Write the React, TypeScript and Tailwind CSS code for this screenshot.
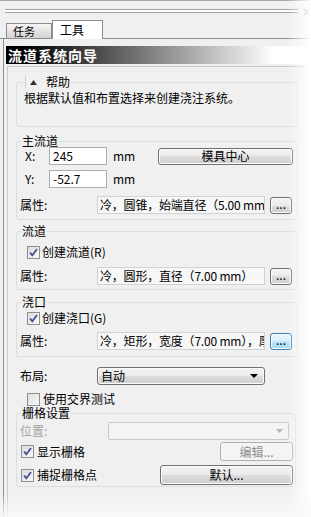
import React from "react";

function Check({ checked = false }: { checked?: boolean }) {
  return (
    <span className="w-[13px] h-[13px] shrink-0 border border-[#8e8f8f] bg-[linear-gradient(135deg,#dcdcdc,#fbfbfb)] flex items-center justify-center">
      {checked && (
        <svg width="11" height="11" viewBox="0 0 11 11">
          <path d="M2 5.5 L4.3 8.3 L9 2" fill="none" stroke="#3f4f8f" strokeWidth="1.8" />
        </svg>
      )}
    </span>
  );
}

function Btn({
  children,
  className,
  variant = "normal",
}: {
  children: React.ReactNode;
  className: string;
  variant?: "normal" | "hot" | "disabled";
}) {
  const v =
    variant === "hot"
      ? "border-[#3c7fb1] bg-[linear-gradient(to_bottom,#eaf6fd_0%,#d9f0fc_50%,#bee6fd_50%,#a7d9f5_100%)] shadow-[inset_0_0_0_1px_#f4fbff]"
      : variant === "disabled"
      ? "border-[#adb2b5] bg-[#f4f4f4] text-[#8d8d8d]"
      : "border-[#707070] bg-[linear-gradient(to_bottom,#f2f2f2_0%,#ebebeb_50%,#dddddd_50%,#cfcfcf_100%)] shadow-[inset_0_0_0_1px_#fbfbfb]";
  return (
    <div className={"shrink-0 border rounded-[3px] flex items-center justify-center leading-[12px] " + v + " " + className}>
      {children}
    </div>
  );
}

function Group({
  legend,
  className,
  legendClass = "ml-[4px]",
  children,
}: {
  legend: React.ReactNode;
  className: string;
  legendClass?: string;
  children: React.ReactNode;
}) {
  return (
    <div className={"border border-[#d5dfe5] rounded-[3px] flex flex-col " + className}>
      <div className={"-mt-[7px] -mb-[5px] h-[12px] px-[1px] self-start bg-[#f0f0f0] leading-[12px] flex items-center " + legendClass}>
        {legend}
      </div>
      {children}
    </div>
  );
}

function PropRow({ text, hot = false, className }: { text: string; hot?: boolean; className: string }) {
  return (
    <div className={"h-[18px] flex items-center " + className}>
      <div className="w-[80px] pl-[3px] shrink-0">属性:</div>
      <div className="w-[168px] h-[18px] shrink-0 border border-[#cfd3d6] bg-[#f7f7f7] overflow-hidden whitespace-nowrap pl-[2px] leading-[16px] tracking-[-0.2px]">
        {text}
      </div>
      <Btn className="ml-[5px] w-[22px] h-[17px]" variant={hot ? "hot" : "normal"}>
        <span className="-mt-[3px]">...</span>
      </Btn>
    </div>
  );
}

export default function App() {
  return (
    <div className="w-[311px] h-[517px] relative overflow-hidden bg-[#f0f0f0] text-black text-[12px] leading-[14px] font-['Noto_Sans_CJK_SC','Liberation_Sans',sans-serif]">
      {/* top strip */}
      <div className="h-[20px] border-t border-[#a9a9a9] flex items-start pt-[7px]">
        <div className="ml-[5px] w-[293px] h-[4px] border-y border-[#a3a3a3] bg-white mt-[1px]" />
        <div className="ml-[5px] w-[8px] h-[8px] flex items-center justify-center">
          <svg width="8" height="8" viewBox="0 0 8 8">
            <path d="M1 1 L7 7 M7 1 L1 7" stroke="#8a8a8a" strokeWidth="1.4" />
          </svg>
        </div>
      </div>
      {/* tabs */}
      <div className="h-[19px] flex items-end pl-[6px] border-b border-[#8c8e94]">
        <div className="w-[46px] h-[15px] border border-b-0 border-[#8c8e94] bg-[linear-gradient(to_bottom,#f6f6f6,#d3d3d3)] pl-[6px] pt-[1px] text-[11px] leading-[12px]">
          任务
        </div>
        <div className="w-[51px] h-[19px] -mb-px border border-b-0 border-[#8c8e94] bg-white pl-[7px] pt-[2px] leading-[13px]">
          工具
        </div>
      </div>
      {/* body */}
      <div className="ml-[3px] border-l border-[#8f8f8f] pl-[2px] pt-[7px] h-[478px] flex flex-col">
        <div className="h-[18px] bg-[linear-gradient(to_right,#000_6%,#fff_88%)] pl-[2px] text-white font-bold text-[14px] tracking-[1px] leading-[18px]">
          流道系统向导
        </div>
        <div className="mt-[2px] ml-[1px] flex-1 border-l border-t border-[#c9c9c9] pl-[8px] pr-[13px] flex flex-col">
          {/* help */}
          <Group
            className="mt-[15px] pb-[21px]"
            legendClass="ml-[8px] border-l border-[#c8d0d6] pl-[4px]"
            legend={
              <span className="flex items-center gap-[9px]">
                <svg width="7" height="5" viewBox="0 0 7 5">
                  <path d="M0 5 L3.5 0 L7 5 Z" fill="#333" />
                </svg>
                <span>帮助</span>
              </span>
            }
          >
            <div className="mt-[8px] pl-[7px] whitespace-nowrap">根据默认值和布置选择来创建浇注系统。</div>
          </Group>

          {/* 主流道 */}
          <Group className="mt-[14px] pb-[5px] pr-[4px]" legend="主流道">
            <div className="mt-[5px] h-[18px] flex items-center">
              <div className="w-[32px] pl-[8px] shrink-0">X:</div>
              <div className="w-[58px] h-[18px] shrink-0 border border-[#abadb3] bg-white pl-[3px] leading-[16px]">245</div>
              <div className="ml-[6px]">mm</div>
              <Btn className="ml-auto w-[135px] h-[17px]">模具中心</Btn>
            </div>
            <div className="mt-[5px] h-[18px] flex items-center">
              <div className="w-[32px] pl-[8px] shrink-0">Y:</div>
              <div className="w-[58px] h-[18px] shrink-0 border border-[#abadb3] bg-white pl-[3px] leading-[16px]">-52.7</div>
              <div className="ml-[6px]">mm</div>
            </div>
            <PropRow className="mt-[8px]" text="冷，圆锥，始端直径（5.00 mm），" />
          </Group>

          {/* 流道 */}
          <Group className="mt-[11px] pb-[4px] pr-[4px]" legend="流道">
            <div className="mt-[13px] h-[14px] flex items-center pl-[10px]">
              <Check checked />
              <span className="ml-[2px]">创建流道(R)</span>
            </div>
            <PropRow className="mt-[8px]" text="冷，圆形，直径（7.00 mm）" />
          </Group>

          {/* 浇口 */}
          <Group className="mt-[12px] pb-[6px] pr-[4px]" legend="浇口">
            <div className="mt-[8px] h-[14px] flex items-center pl-[10px]">
              <Check checked />
              <span className="ml-[2px]">创建浇口(G)</span>
            </div>
            <PropRow className="mt-[7px]" hot text="冷，矩形，宽度（7.00 mm），厚度（2.00 mm）" />
          </Group>

          {/* 布局 */}
          <div className="mt-[10px] h-[18px] flex items-center">
            <div className="w-[81px] pl-[4px] shrink-0">布局:</div>
            <Btn className="w-[168px] h-[18px] !justify-between pl-[3px] pr-[6px]">
              <span>自动</span>
              <svg width="8" height="4" viewBox="0 0 8 4">
                <path d="M0 0 L8 0 L4 4 Z" fill="#000" />
              </svg>
            </Btn>
          </div>

          <div className="mt-[7px] h-[14px] flex items-center pl-[11px]">
            <Check />
            <span className="ml-[3px]">使用交界测试</span>
          </div>

          {/* 栅格设置 */}
          <Group className="mt-[7px] mr-[2px] pb-[1px] pr-[2px]" legend="栅格设置">
            <div className="mt-[8px] h-[18px] flex items-center">
              <div className="w-[91px] pl-[3px] shrink-0 text-[#a3a3a3]">位置:</div>
              <div className="w-[181px] h-[18px] shrink-0 border border-[#c6cacd] rounded-[2px] bg-[#f4f4f4] flex items-center justify-end pr-[5px]">
                <svg width="7" height="4" viewBox="0 0 7 4">
                  <path d="M0 0 L7 0 L3.5 4 Z" fill="#b5b5b5" />
                </svg>
              </div>
            </div>
            <div className="mt-[2px] h-[19px] flex items-center pl-[4px]">
              <Check checked />
              <span className="ml-[3px]">显示栅格</span>
              <Btn className="ml-auto w-[73px] h-[19px]" variant="disabled">编辑...</Btn>
            </div>
            <div className="mt-[4px] h-[20px] flex items-center pl-[4px]">
              <Check checked />
              <span className="ml-[3px]">捕捉栅格点</span>
              <Btn className="ml-auto w-[133px] h-[20px]">默认...</Btn>
            </div>
          </Group>
        </div>
      </div>
      {/* right fade overlay */}
      <div className="pointer-events-none absolute top-0 right-0 h-full w-[24px] bg-[linear-gradient(to_right,rgba(255,255,255,0),#fff)]" />
      <div className="pointer-events-none absolute bottom-0 left-0 w-full h-[24px] bg-[linear-gradient(to_bottom,rgba(250,250,250,0),rgba(250,250,250,0.9))]" />
    </div>
  );
}
